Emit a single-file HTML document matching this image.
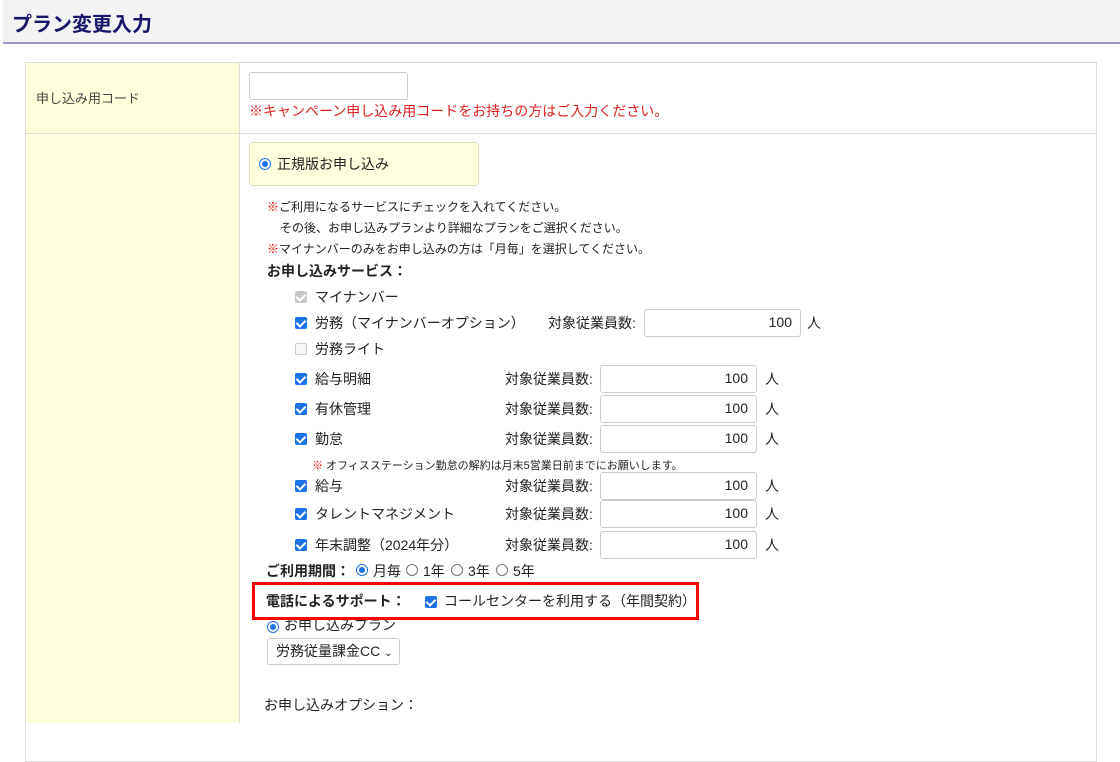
<!DOCTYPE html><html><head><meta charset="utf-8"><style>
*{margin:0;padding:0;box-sizing:border-box}
body{width:1120px;height:720px;overflow:hidden;background:#fff;font-family:"Liberation Sans","Noto Sans CJK JP",sans-serif;color:#222;position:relative;font-size:14px}
.a{position:absolute;white-space:nowrap}
.inp{position:absolute;border:1px solid #ccc;border-radius:3px;background:#fff;text-align:right;padding-right:8px;font-size:14px;line-height:25px}
.cb{position:absolute;width:12px;height:12px;border-radius:2px;background:#1a73e8}
.cb:after{content:"";position:absolute;left:3px;top:1px;width:4px;height:7px;border:solid #fff;border-width:0 2px 2px 0;transform:rotate(45deg)}
.rd{position:absolute;width:12px;height:12px;border-radius:50%;border:1px solid #1a73e8;background:#fff}
.rd.on:after{content:"";position:absolute;left:2px;top:2px;width:6px;height:6px;border-radius:50%;background:#1a73e8}
.ro{position:absolute;width:12px;height:12px;border-radius:50%;border:1px solid #777;background:#fff}
</style></head><body>
<div class="a" style="left:3px;top:0;width:1117px;height:44px;background:#f3f3f3;border-bottom:2px solid #9a9ac8"></div>
<div class="a" style="left:12px;top:8px;font-size:20px;font-weight:bold;color:#16166a">プラン変更入力</div>
<div class="a" style="left:25px;top:62px;width:1072px;height:700px;border:1px solid #ddd"></div>
<div class="a" style="left:26px;top:63px;width:214px;height:660px;background:#ffffdc;border-right:1px solid #ddd"></div>
<div class="a" style="left:25px;top:133px;width:1072px;height:1px;background:#ddd"></div>
<div class="a" style="left:36px;top:88px;font-size:13px;color:#444">申し込み用コード</div>
<div class="inp" style="left:249px;top:72px;width:159px;height:28px"></div>
<div class="a" style="left:249px;top:101px;color:#e02020;font-size:14px">※キャンペーン申し込み用コードをお持ちの方はご入力ください。</div>
<div class="a" style="left:249px;top:142px;width:230px;height:44px;background:#ffffe0;border:1px solid #e0e0c0;border-radius:4px"></div>
<div class="rd on" style="left:259px;top:158px"></div>
<div class="a" style="left:277px;top:154px;font-size:14px">正規版お申し込み</div>
<div class="a" style="left:267px;top:198px;font-size:12px"><span style="color:#e00">※</span>ご利用になるサービスにチェックを入れてください。</div>
<div class="a" style="left:280px;top:219px;font-size:12px">その後、お申し込みプランより詳細なプランをご選択ください。</div>
<div class="a" style="left:267px;top:240px;font-size:12px"><span style="color:#e00">※</span>マイナンバーのみをお申し込みの方は「月毎」を選択してください。</div>
<div class="a" style="left:267px;top:261px;font-size:14px;font-weight:bold">お申し込みサービス：</div>
<div class="cb" style="left:295px;top:291px;background:#c8c8c8"></div><div class="a" style="left:315px;top:287px">マイナンバー</div>
<div class="cb" style="left:295px;top:317px"></div><div class="a" style="left:315px;top:313px">労務（マイナンバーオプション）</div>
<div class="a" style="left:548px;top:313px">対象従業員数:</div><div class="inp" style="left:644px;top:309px;width:157px;height:28px">100</div><div class="a" style="left:807px;top:313px">人</div>
<div class="a" style="left:295px;top:343px;width:12px;height:12px;border:1px solid #ccc;border-radius:2px;background:#f8f8f8"></div><div class="a" style="left:315px;top:339px">労務ライト</div>
<div class="cb" style="left:295px;top:373px"></div><div class="a" style="left:315px;top:369px">給与明細</div>
<div class="a" style="left:505px;top:369px">対象従業員数:</div><div class="inp" style="left:600px;top:365px;width:157px;height:28px">100</div><div class="a" style="left:765px;top:369px">人</div>
<div class="cb" style="left:295px;top:403px"></div><div class="a" style="left:315px;top:399px">有休管理</div>
<div class="a" style="left:505px;top:399px">対象従業員数:</div><div class="inp" style="left:600px;top:395px;width:157px;height:28px">100</div><div class="a" style="left:765px;top:399px">人</div>
<div class="cb" style="left:295px;top:433px"></div><div class="a" style="left:315px;top:429px">勤怠</div>
<div class="a" style="left:505px;top:429px">対象従業員数:</div><div class="inp" style="left:600px;top:425px;width:157px;height:28px">100</div><div class="a" style="left:765px;top:429px">人</div>
<div class="a" style="left:312px;top:457px;font-size:11px"><span style="color:#e00">※</span> オフィスステーション勤怠の解約は月末5営業日前までにお願いします。</div>
<div class="cb" style="left:295px;top:480px"></div><div class="a" style="left:315px;top:476px">給与</div>
<div class="a" style="left:505px;top:476px">対象従業員数:</div><div class="inp" style="left:600px;top:472px;width:157px;height:28px">100</div><div class="a" style="left:765px;top:476px">人</div>
<div class="cb" style="left:295px;top:508px"></div><div class="a" style="left:315px;top:504px">タレントマネジメント</div>
<div class="a" style="left:505px;top:504px">対象従業員数:</div><div class="inp" style="left:600px;top:500px;width:157px;height:28px">100</div><div class="a" style="left:765px;top:504px">人</div>
<div class="cb" style="left:295px;top:539px"></div><div class="a" style="left:315px;top:535px">年末調整（2024年分）</div>
<div class="a" style="left:505px;top:535px">対象従業員数:</div><div class="inp" style="left:600px;top:531px;width:157px;height:28px">100</div><div class="a" style="left:765px;top:535px">人</div>
<div class="a" style="left:266px;top:561px;font-weight:bold">ご利用期間：</div>
<div class="rd on" style="left:356px;top:564px"></div><div class="a" style="left:373px;top:561px">月毎</div>
<div class="ro" style="left:406px;top:564px"></div><div class="a" style="left:423px;top:561px">1年</div>
<div class="ro" style="left:451px;top:564px"></div><div class="a" style="left:468px;top:561px">3年</div>
<div class="ro" style="left:496px;top:564px"></div><div class="a" style="left:513px;top:561px">5年</div>
<div class="a" style="left:252px;top:582px;width:447px;height:38px;border:3px solid #f00"></div>
<div class="a" style="left:266px;top:591px;font-weight:bold">電話によるサポート：</div>
<div class="cb" style="left:425px;top:596px"></div><div class="a" style="left:444px;top:591px">コールセンターを利用する（年間契約）</div>
<div class="rd on" style="left:267px;top:621px"></div><div class="a" style="left:284px;top:615px;clip-path:inset(5px 0 0 0)">お申し込みプラン</div>
<div class="a" style="left:267px;top:638px;width:133px;height:27px;border:1px solid #ccc;border-radius:3px;padding-left:8px;line-height:25px">労務従量課金CC <span style="font-size:10px">⌄</span></div>
<div class="a" style="left:264px;top:695px">お申し込みオプション：</div>
</body></html>
